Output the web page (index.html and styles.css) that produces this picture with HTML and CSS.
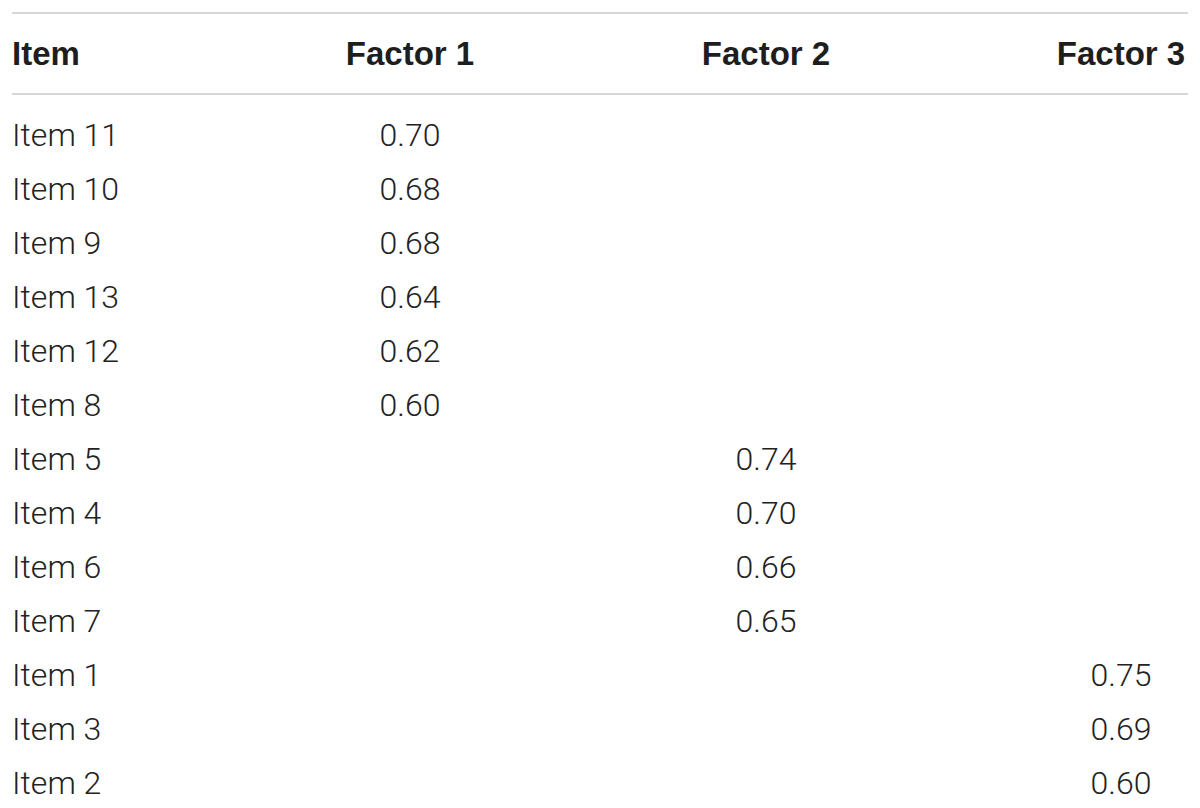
FILE: index.html
```html
<!DOCTYPE html>
<html lang="en">
<head>
<meta charset="utf-8">
<title>Factor loadings</title>
<link rel="stylesheet" href="styles.css">
</head>
<body>
<div class="wrap">
<table class="loadings">
<colgroup>
<col class="c-item"><col class="c-f1"><col class="c-f2"><col class="c-f3">
</colgroup>
<thead>
<tr><th class="left">Item</th><th>Factor 1</th><th>Factor 2</th><th>Factor 3</th></tr>
</thead>
<tbody>
<tr class="first"><td class="left">Item 11</td><td>0.70</td><td></td><td></td></tr>
<tr><td class="left">Item 10</td><td>0.68</td><td></td><td></td></tr>
<tr><td class="left">Item 9</td><td>0.68</td><td></td><td></td></tr>
<tr><td class="left">Item 13</td><td>0.64</td><td></td><td></td></tr>
<tr><td class="left">Item 12</td><td>0.62</td><td></td><td></td></tr>
<tr><td class="left">Item 8</td><td>0.60</td><td></td><td></td></tr>
<tr><td class="left">Item 5</td><td></td><td>0.74</td><td></td></tr>
<tr><td class="left">Item 4</td><td></td><td>0.70</td><td></td></tr>
<tr><td class="left">Item 6</td><td></td><td>0.66</td><td></td></tr>
<tr><td class="left">Item 7</td><td></td><td>0.65</td><td></td></tr>
<tr><td class="left">Item 1</td><td></td><td></td><td>0.75</td></tr>
<tr><td class="left">Item 3</td><td></td><td></td><td>0.69</td></tr>
<tr><td class="left">Item 2</td><td></td><td></td><td>0.60</td></tr>
</tbody>
</table>
</div>
</body>
</html>
```
FILE: styles.css
```css
html, body {
  margin: 0;
  padding: 0;
  background: #ffffff;
}
.wrap {
  padding: 12px 12px 0 12px;
}
.loadings {
  width: 1176px;
  table-layout: fixed;
  border-collapse: collapse;
  border-spacing: 0;
}
.c-item { width: 330px; }
.c-f1 { width: 136px; }
.c-f2 { width: 576px; }
.c-f3 { width: 134px; }
.loadings th,
.loadings td {
  padding: 0;
  text-align: center;
  white-space: nowrap;
}
.loadings .left {
  text-align: left;
}
.loadings thead tr {
  border-top: 2px solid #d6d6d6;
  border-bottom: 2px solid #d6d6d6;
}
.loadings th {
  height: 79px;
  font-family: "Liberation Sans", Arial, sans-serif;
  font-weight: 700;
  font-size: 33px;
  line-height: 79px;
  color: #1e1e1e;
}
.loadings td {
  height: 54px;
  font-family: Roboto, "Liberation Sans", sans-serif;
  font-weight: 300;
  font-size: 32px;
  line-height: 54px;
  color: #222222;
}
.loadings tbody tr.first td {
  padding-top: 13px;
}
```
